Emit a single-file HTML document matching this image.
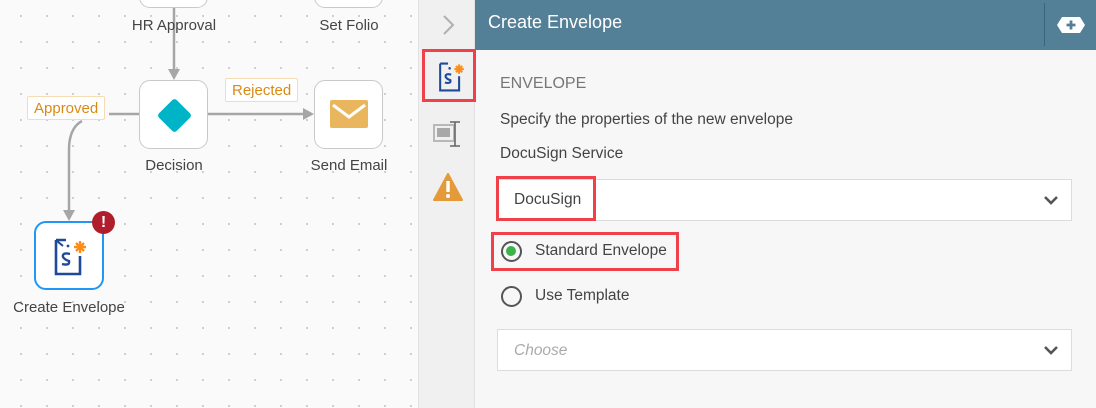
<!DOCTYPE html>
<html><head><meta charset="utf-8"><style>
*{box-sizing:border-box;margin:0;padding:0}
body{width:1096px;height:408px;overflow:hidden;font-family:"Liberation Sans",sans-serif;position:relative;background:#f7f7f7}
.canvas{position:absolute;left:0;top:0;width:418px;height:408px;background-color:#fafafa;background-image:radial-gradient(#c8c8c8 0.8px,transparent 1.2px);background-size:26px 26px;background-position:8px 3px}
.node{position:absolute;width:69px;height:69px;border:1.5px solid #c9c9c9;border-radius:11px;background:#fff}
.lbl{position:absolute;font-size:15px;color:#444;text-align:center;width:140px}
.tag{position:absolute;border:1px solid #f6dcb4;background:#fff;color:#d98a14;font-size:15px;padding:2px 6px;border-radius:2px;height:24px;line-height:19px}
.strip{position:absolute;left:418px;top:0;width:57px;height:408px;background:#f0f0f0;border-left:1px solid #e2e2e2;border-right:1px solid #e2e2e2}
.hdr{position:absolute;left:475px;top:0;width:621px;height:50px;background:#537f97;color:#fff;font-size:18px;line-height:44px;padding-left:13px}
.t{position:absolute;color:#444;font-size:15.5px;white-space:nowrap}
.sel{position:absolute;left:497px;width:575px;height:42px;background:#fff;border:1px solid #dcdcdc}
.red{position:absolute;border:3px solid #f0414a}
</style></head><body>
<div class="canvas"></div>
<svg style="position:absolute;left:0;top:0" width="418" height="408">
<g stroke="#a6a6a6" stroke-width="2.5" fill="none">
<line x1="174" y1="8" x2="174" y2="72"/>
<line x1="109" y1="114" x2="139" y2="114"/>
<line x1="208" y1="114" x2="306" y2="114"/>
<path d="M82 121 Q69 128 69 150 L69 212"/>
</g>
<g fill="#a6a6a6">
<polygon points="168,69 180,69 174,80"/>
<polygon points="303,108 303,120 314,114"/>
<polygon points="63,210 75,210 69,221"/>
</g>
</svg>
<div class="node" style="left:139px;top:-61px"></div>
<div class="node" style="left:314px;top:-61px"></div>
<div class="lbl" style="left:104px;top:17px">HR Approval</div>
<div class="lbl" style="left:279px;top:17px">Set Folio</div>
<div class="node" style="left:139px;top:80px"><div style="position:absolute;left:22px;top:22px;width:25px;height:25px;background:#00b4c8;transform:rotate(45deg);border-radius:3px"></div></div>
<div class="node" style="left:314px;top:80px"><svg style="position:absolute;left:15px;top:19px" width="38" height="29"><rect width="38" height="28" rx="2" fill="#e9b65d"/><polyline points="3,5 19,17 35,5" stroke="#fff" stroke-width="3" fill="none"/></svg></div>
<div class="lbl" style="left:104px;top:157px">Decision</div>
<div class="lbl" style="left:279px;top:157px">Send Email</div>
<div class="tag" style="left:27px;top:96px">Approved</div>
<div class="tag" style="left:225px;top:78px">Rejected</div>
<div class="node" style="left:34px;top:221px;width:70px;height:69px;border:2.5px solid #2196f3;border-radius:12px">
<svg style="position:absolute;left:18px;top:15px" width="34" height="38" viewBox="0 0 34 38"><path d="M2 2 H12 M2 2 V36 H26 V18" stroke="#1f4a9a" stroke-width="2.6" fill="none"/><path d="M3 3 L9 8" stroke="#1f4a9a" stroke-width="2"/><circle cx="14" cy="8" r="1.4" fill="#1f4a9a"/><path d="M16 16 Q8 14 9 19 Q11 22 15 23 Q16 28 8 26" stroke="#1f4a9a" stroke-width="2.4" fill="none"/><g stroke="#ff8c1a" stroke-width="2.4"><line x1="26" y1="3" x2="26" y2="15"/><line x1="20" y1="9" x2="32" y2="9"/><line x1="22" y1="5" x2="30" y2="13"/><line x1="30" y1="5" x2="22" y2="13"/></g></svg></div>
<div style="position:absolute;left:92px;top:211px;width:23px;height:23px;border-radius:50%;background:#b01e2c;color:#fff;font-weight:bold;font-size:16px;text-align:center;line-height:23px">!</div>
<div class="lbl" style="left:-1px;top:299px">Create Envelope</div>

<div class="strip"></div>
<svg style="position:absolute;left:440px;top:14px" width="18" height="22"><polyline points="4,2 13,11 4,20" stroke="#b0b0b0" stroke-width="2" fill="none"/></svg>
<div class="red" style="left:422px;top:49px;width:54px;height:53px"></div>
<svg style="position:absolute;left:438px;top:62px" width="28" height="30" viewBox="0 0 34 38"><path d="M2 2 H12 M2 2 V36 H26 V18" stroke="#1f4a9a" stroke-width="2.6" fill="none"/><circle cx="14" cy="8" r="1.6" fill="#1f4a9a"/><path d="M16 16 Q8 14 9 19 Q11 22 15 23 Q16 28 8 26" stroke="#1f4a9a" stroke-width="2.6" fill="none"/><g stroke="#ff8c1a" stroke-width="2.6"><line x1="26" y1="3" x2="26" y2="15"/><line x1="20" y1="9" x2="32" y2="9"/><line x1="22" y1="5" x2="30" y2="13"/><line x1="30" y1="5" x2="22" y2="13"/></g></svg>
<svg style="position:absolute;left:433px;top:120px" width="30" height="28"><rect x="1" y="5" width="20" height="16" fill="none" stroke="#b8b8b8" stroke-width="2"/><rect x="4" y="8" width="13" height="9" fill="#a8a8a8"/><path d="M17 2 H27 M22 2 V26 M17 26 H27" stroke="#666" stroke-width="1.6"/></svg>
<svg style="position:absolute;left:432px;top:172px" width="32" height="30"><path d="M16 2 L30 28 H2 Z" fill="#e59a3a" stroke="#e59a3a" stroke-width="2" stroke-linejoin="round"/><rect x="14.3" y="9" width="3.4" height="11" fill="#fff"/><circle cx="16" cy="24" r="2" fill="#fff"/></svg>

<div class="hdr">Create Envelope</div>
<div style="position:absolute;left:1044px;top:3px;width:1px;height:43px;background:#3d6378"></div>
<svg style="position:absolute;left:1056px;top:16px" width="30" height="18"><path d="M6 1 H24 L29 9 L24 17 H6 L1 9 Z" fill="#fff"/><path d="M15 4.5 V13.5 M10.5 9 H19.5" stroke="#537f97" stroke-width="2.8"/></svg>

<div class="t" style="left:500px;top:75px;font-size:16px;color:#777">ENVELOPE</div>
<div class="t" style="left:500px;top:111px">Specify the properties of the new envelope</div>
<div class="t" style="left:500px;top:145px">DocuSign Service</div>
<div class="sel" style="top:179px"><span class="t" style="left:16px;top:11px">DocuSign</span><svg style="position:absolute;right:12px;top:15px" width="16" height="11"><polyline points="2,2 8,8 14,2" stroke="#555" stroke-width="2.6" fill="none"/></svg></div>
<div class="red" style="left:496px;top:176px;width:100px;height:45px"></div>
<div style="position:absolute;left:501px;top:241px;width:21px;height:21px;border:2.5px solid #555;border-radius:50%"><div style="position:absolute;left:3px;top:3px;width:10px;height:10px;border-radius:50%;background:#3cb34a"></div></div>
<div class="t" style="left:535px;top:242px">Standard Envelope</div>
<div class="red" style="left:491px;top:232px;width:188px;height:39px"></div>
<div style="position:absolute;left:501px;top:286px;width:21px;height:21px;border:2.5px solid #555;border-radius:50%"></div>
<div class="t" style="left:535px;top:287px">Use Template</div>
<div class="sel" style="top:329px"><span class="t" style="left:16px;top:12px;color:#aaa;font-style:italic">Choose</span><svg style="position:absolute;right:12px;top:15px" width="16" height="11"><polyline points="2,2 8,8 14,2" stroke="#555" stroke-width="2.6" fill="none"/></svg></div>
</body></html>
